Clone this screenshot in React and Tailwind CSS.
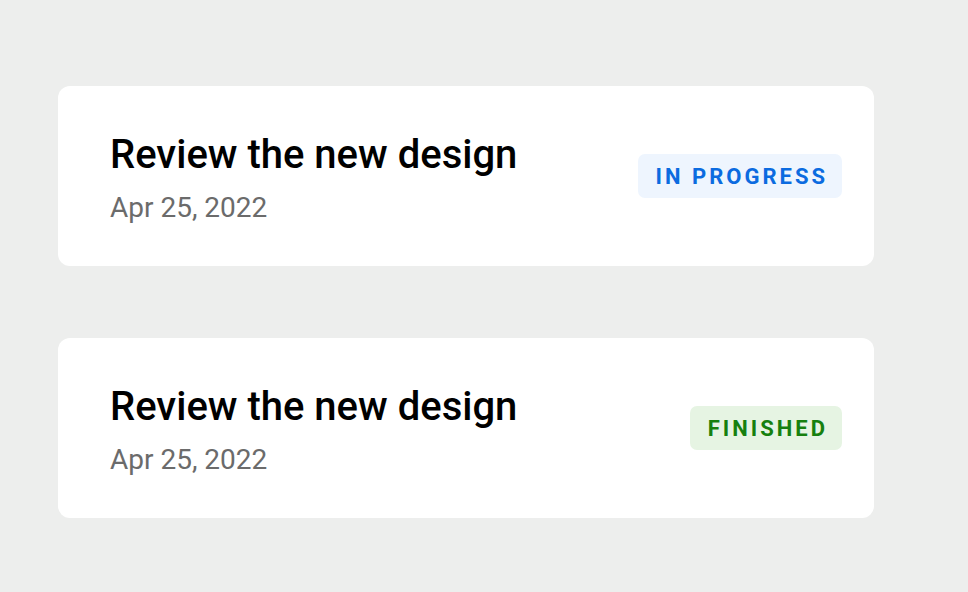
import React from "react";

function Card({ title, date, status, tone }) {
  const badge =
    tone === "blue"
      ? "bg-[#eef5fe] text-[#0b6be0]"
      : "bg-[#e6f4e3] text-[#16800f]";
  return (
    <div className="flex h-[180px] w-[816px] items-center justify-between rounded-[12px] bg-white pl-[52px] pr-[32px]">
      <div className="flex flex-col pt-[3px]">
        <div className="text-[40px] font-medium leading-[48px] text-black">{title}</div>
        <div className="mt-[13px] text-[28px] leading-[32px] text-[#6b6b6b]">{date}</div>
      </div>
      <div
        className={`flex h-[44px] items-center rounded-[7px] pl-[18px] pr-[14px] text-[22px] font-bold tracking-[3px] ${badge}`}
      >
        {status}
      </div>
    </div>
  );
}

export default function App() {
  return (
    <div
      className="flex min-h-[592px] w-full flex-col gap-[72px] bg-[#edeeed] pl-[58px] pt-[86px]"
      style={{ fontFamily: "Roboto, 'Noto Sans', sans-serif" }}
    >
      <Card title="Review the new design" date="Apr 25, 2022" status="IN PROGRESS" tone="blue" />
      <Card title="Review the new design" date="Apr 25, 2022" status="FINISHED" tone="green" />
    </div>
  );
}
